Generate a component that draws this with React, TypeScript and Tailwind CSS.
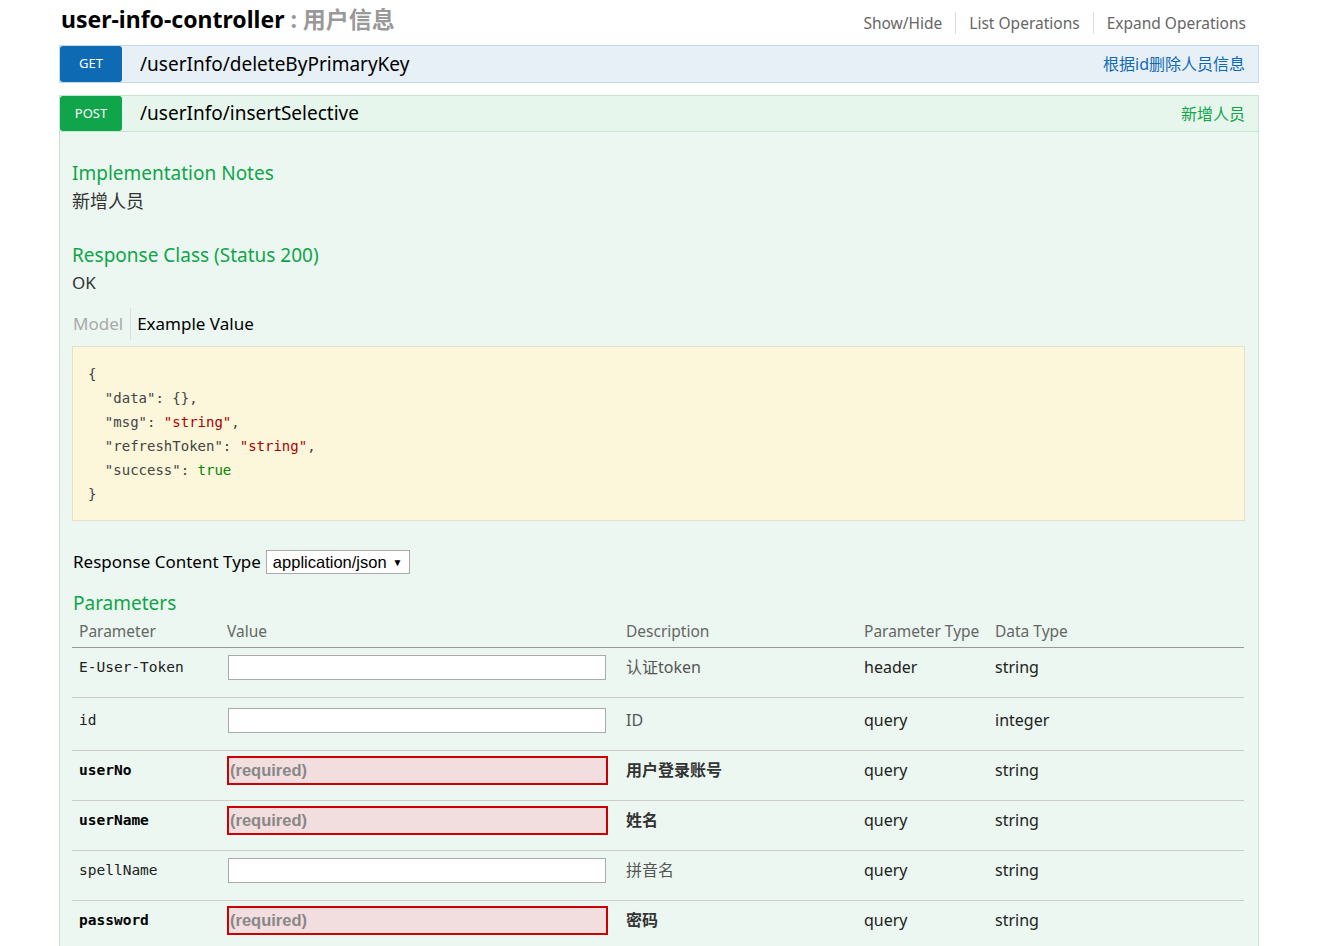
import React from "react";

const sans = "font-['Noto_Sans','Noto_Sans_CJK_SC',sans-serif]";
const mono = "font-['DejaVu_Sans_Mono',monospace]";

type Row = {
  name: string;
  required: boolean;
  desc: string;
  ptype: string;
  dtype: string;
  h: string;
  pt: string;
};

const rows: Row[] = [
  { name: "E-User-Token", required: false, desc: "认证token", ptype: "header", dtype: "string", h: "h-[50px]", pt: "pt-[7px]" },
  { name: "id", required: false, desc: "ID", ptype: "query", dtype: "integer", h: "h-[53px]", pt: "pt-[10px]" },
  { name: "userNo", required: true, desc: "用户登录账号", ptype: "query", dtype: "string", h: "h-[50px]", pt: "pt-[5px]" },
  { name: "userName", required: true, desc: "姓名", ptype: "query", dtype: "string", h: "h-[50px]", pt: "pt-[5px]" },
  { name: "spellName", required: false, desc: "拼音名", ptype: "query", dtype: "string", h: "h-[50px]", pt: "pt-[7px]" },
  { name: "password", required: true, desc: "密码", ptype: "query", dtype: "string", h: "h-[50px]", pt: "pt-[5px]" },
];

function ParamRow({ r }: { r: Row }) {
  const lh = r.required ? "leading-[29px]" : "leading-[25px]";
  return (
    <div className={`grid w-[1172px] grid-cols-[149px_399px_238px_131px_255px] border-b border-[#cccccc] ${r.h} ${r.pt}`}>
      <div className={`pl-[7px] ${mono} text-[14.5px] ${lh} ${r.required ? "font-bold text-black" : "text-[#222]"}`}>{r.name}</div>
      <div className="pl-[6px]">
        {r.required ? (
          <input
            placeholder="(required)"
            className="block w-[381px] h-[29px] border border-[#aaaaaa] outline-2 outline-[#cc0000] -outline-offset-2 bg-[#f2dede] px-[2px] font-['Liberation_Sans',sans-serif] font-bold text-[16.5px] placeholder:text-[#888888]"
            style={{ outlineStyle: "solid" }}
          />
        ) : (
          <input className="block ml-[1px] w-[378px] h-[25px] border border-[#aaaaaa] bg-white" />
        )}
      </div>
      <div className={`pl-[6px] text-[16px] ${lh} ${r.required ? "font-bold text-[#333]" : "text-[#555]"}`}>{r.desc}</div>
      <div className={`pl-[6px] text-[16px] ${lh} text-[#222]`}>{r.ptype}</div>
      <div className={`pl-[6px] text-[16px] ${lh} text-[#222]`}>{r.dtype}</div>
    </div>
  );
}

export default function App() {
  return (
    <div className={`h-[946px] overflow-hidden bg-white ${sans} text-[#333]`}>
      <div className="ml-[59px] w-[1200px]">
        {/* header */}
        <div className="flex h-[45px] items-start justify-between">
          <div className="pt-[3px] pl-[2px] text-[23px] font-bold leading-[32px]">
            <span className="text-black">user-info-controller</span>
            <span className="text-[#999]"> : 用户信息</span>
          </div>
          <div className="flex items-center pt-[12px] pr-[13px] text-[15.5px] leading-[22px] text-[#666]">
            <span className="pr-[13px]">Show/Hide</span>
            <span className="border-l border-[#ddd] px-[13px]">List Operations</span>
            <span className="border-l border-[#ddd] pl-[13px]">Expand Operations</span>
          </div>
        </div>

        {/* GET */}
        <div className="flex h-[38px] items-stretch border border-[#c3d9ec] bg-[#e7f0f7]">
          <div className="flex w-[62px] items-center justify-center rounded-[3px] bg-[#0f6ab4] text-[13px] text-white">GET</div>
          <div className="ml-[18px] flex flex-1 items-center text-[19px] text-black">/userInfo/deleteByPrimaryKey</div>
          <div className="flex items-center pr-[13px] text-[16px] text-[#0f6ab4]">根据id删除人员信息</div>
        </div>

        {/* POST */}
        <div className="mt-[12px] flex h-[37px] items-stretch border border-[#c3e8d1] bg-[#e7f6ec]">
          <div className="flex w-[62px] items-center justify-center rounded-[3px] bg-[#10a54a] text-[13px] text-white">POST</div>
          <div className="ml-[18px] flex flex-1 items-center text-[19px] text-black">/userInfo/insertSelective</div>
          <div className="flex items-center pr-[13px] text-[16px] text-[#10a54a]">新增人员</div>
        </div>

        <div className="h-[815px] border border-t-0 border-[#c3e8d1] bg-[#ebf7f0] px-[12px] pt-[29px]">
          <div className="text-[19px] leading-[24px] text-[#10a54a]">Implementation Notes</div>
          <div className="text-[18px] leading-[32px] text-[#333]">新增人员</div>

          <div className="mt-[26px] text-[19px] leading-[24px] text-[#10a54a]">Response Class (Status 200)</div>
          <div className="text-[17px] leading-[32px] text-[#333]">OK</div>

          <div className="mt-[9px] flex h-[32px] items-center text-[17px]">
            <span className="pl-[1px] pr-[7px] text-[#aaa]">Model</span>
            <span className="h-[32px] border-l border-[#ddd]" />
            <span className="pl-[6px] text-black">Example Value</span>
          </div>

          <div className={`mt-[6px] h-[175px] w-[1173px] border border-[#e5e0c6] bg-[#fcf6db] pl-[15px] pt-[15px] ${mono} text-[14px] leading-[24px] text-[#444] whitespace-pre`}>
            <div>{"{"}</div>
            <div>{'  "data": {},'}</div>
            <div>
              {'  "msg": '}
              <span className="text-[#a00]">"string"</span>,
            </div>
            <div>
              {'  "refreshToken": '}
              <span className="text-[#a00]">"string"</span>,
            </div>
            <div>
              {'  "success": '}
              <span className="text-[#080]">true</span>
            </div>
            <div>{"}"}</div>
          </div>

          <div className="mt-[29px] flex h-[24px] items-center text-[17px] text-black">
            <span className="pl-[1px]">Response Content Type</span>
            <span className="ml-[5px] flex h-[24px] w-[144px] items-center border border-[#aaa] bg-white pl-[6px] font-['Liberation_Sans',sans-serif] text-[16.5px]">
              application/json
              <span className="ml-[6px] text-[10px]">▼</span>
            </span>
          </div>

          <div className="mt-[17px] pl-[1px] text-[19px] leading-[24px] text-[#10a54a]">Parameters</div>

          <div className="mt-[2px] grid h-[31px] w-[1172px] grid-cols-[149px_399px_238px_131px_255px] items-center border-b border-[#999] text-[15.5px] text-[#666]">
            <div className="pl-[7px]">Parameter</div>
            <div className="pl-[6px]">Value</div>
            <div className="pl-[6px]">Description</div>
            <div className="pl-[6px]">Parameter Type</div>
            <div className="pl-[6px]">Data Type</div>
          </div>

          {rows.map((r) => (
            <ParamRow key={r.name} r={r} />
          ))}
        </div>
      </div>
    </div>
  );
}
